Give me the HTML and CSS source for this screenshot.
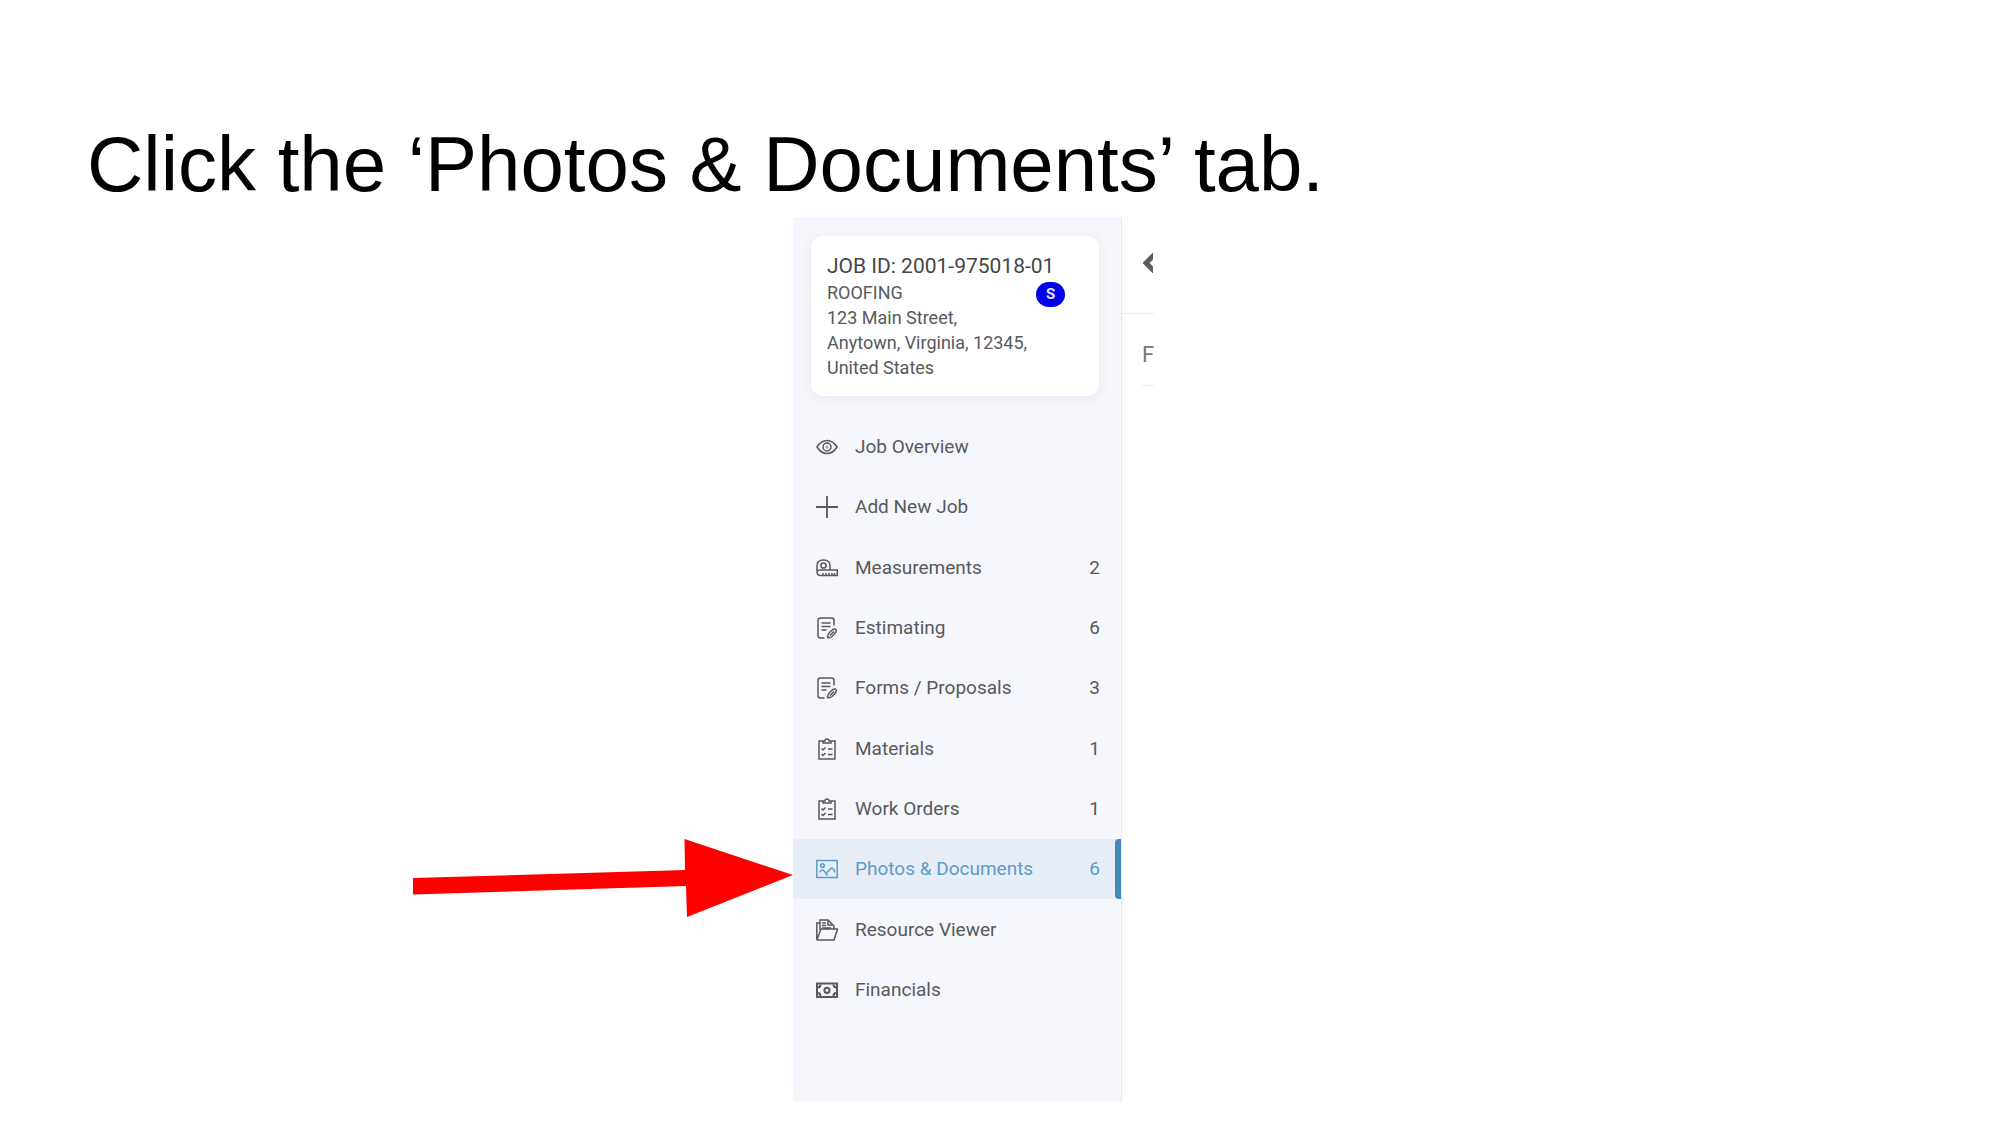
FILE: index.html
```html
<!DOCTYPE html>
<html lang="en">
<head>
<meta charset="utf-8">
<title>Photos &amp; Documents tab</title>
<link rel="stylesheet" href="styles.css">
</head>
<body>
<svg class="sprite" aria-hidden="true">
  <symbol id="doc-edit" viewBox="0 0 22 22">
    <path d="M18 8.500V3.500Q18 1 15.500 1H4.500Q2 1 2 3.500V18.500Q2 21 4.500 21H8.500M5.500 6H14.500M5.500 9.500H14.500M5.500 13H10.500"/>
    <path d="M11.500 20.500Q11.500 17.500 13.500 15.500L17 12.500Q20 11 20.300 13.500Q20.300 15 18.500 17L16 19.500Q14 21 11.500 20.500ZM14 18.500L18 14.500"/>
  </symbol>
  <symbol id="checklist" viewBox="0 0 22 22">
    <path d="M7 3H3V21H19V3H15M7 5V3H9Q9 1 11 1T13 3H15V5Z"/>
    <path d="M5.500 10.500L7 12L9.500 9.500M12 11H16.500M5.500 16L7 17.500L9.500 15M12 16.500H16.500"/>
  </symbol>
</svg>
<main class="slide">
  <h1 class="title">Click the ‘Photos &amp; Documents’ tab.</h1>
  <div class="stage">
    <svg class="arrow" viewBox="0 0 380 78" role="img" aria-label="Arrow pointing at Photos &amp; Documents">
      <path d="M0 39L272 31L271.500 0L380 36L274 78L273 47L0 55.500Z"/>
    </svg>
    <div class="app">
      <aside class="sidebar">
        <section class="card">
          <div class="job-id">JOB ID: 2001-975018-01</div>
          <div class="trade"><span>ROOFING</span><span class="badge">S</span></div>
          <address class="address">123 Main Street,<br>Anytown, Virginia, 12345,<br>United States</address>
        </section>
        <nav class="menu">
          <a class="item" href="#overview">
            <svg class="icon" viewBox="0 0 22 22"><path d="M1 11Q5 4.500 11 4.500T21 11Q17 17.500 11 17.500T1 11Z"/><circle cx="11" cy="11" r="4"/><circle cx="11" cy="11" r="1" stroke-width=".6"/></svg>
            <span class="label">Job Overview</span>
          </a>
          <a class="item" href="#add">
            <svg class="icon" viewBox="0 0 22 22"><path stroke-width="1.800" d="M11 0V22M0 11H22"/></svg>
            <span class="label">Add New Job</span>
          </a>
          <a class="item" href="#measurements">
            <svg class="icon" viewBox="0 0 22 22"><path d="M1 14V9Q1 3 7.500 3T14 9V13H21.300V18.500H5Q1 18.500 1 15Q1 13 4 13H14M7 18V16M10 18V16M13 18V16M16 18V16M18.500 18V16"/><circle cx="7.500" cy="8.500" r="2.600"/></svg>
            <span class="label">Measurements</span><span class="count">2</span>
          </a>
          <a class="item" href="#estimating">
            <svg class="icon"><use href="#doc-edit"/></svg>
            <span class="label">Estimating</span><span class="count">6</span>
          </a>
          <a class="item" href="#forms">
            <svg class="icon"><use href="#doc-edit"/></svg>
            <span class="label">Forms / Proposals</span><span class="count">3</span>
          </a>
          <a class="item" href="#materials">
            <svg class="icon"><use href="#checklist"/></svg>
            <span class="label">Materials</span><span class="count">1</span>
          </a>
          <a class="item" href="#orders">
            <svg class="icon"><use href="#checklist"/></svg>
            <span class="label">Work Orders</span><span class="count">1</span>
          </a>
          <a class="item active" href="#photos" aria-current="page">
            <svg class="icon" viewBox="0 0 22 22"><path d="M.8 2.500H21.200V19.500H.8ZM3.500 14.500Q5 11.500 7 12Q9 13 10 16L12 17M10.500 15L15.500 10Q17.500 10 19 14.500"/><circle cx="6.500" cy="7.500" r="1.800"/></svg>
            <span class="label">Photos &amp; Documents</span><span class="count">6</span>
          </a>
          <a class="item" href="#resources">
            <svg class="icon" viewBox="0 0 22 22"><path d="M4 4H.8V21L5 10H21.500L18 21H.8M4 11V1H12L18 7V10M12 1V6H17M6 4H10M6 6.500H10M6 9H15"/></svg>
            <span class="label">Resource Viewer</span>
          </a>
          <a class="item" href="#financials">
            <svg class="icon bold" viewBox="0 0 22 22"><path d="M1 4.500H21V18H1Z"/><circle cx="11" cy="11.300" r="2.600"/><path d="M1.500 8.500Q4.500 8.500 4.500 5.500M20.500 8.500Q17.500 8.500 17.500 5.500M1.500 14Q4.500 14 4.500 17M20.500 14Q17.500 14 17.500 17"/></svg>
            <span class="label">Financials</span>
          </a>
        </nav>
      </aside>
      <section class="content">
        <div class="back"><svg class="chevron" viewBox="0 0 10 20" aria-hidden="true"><path d="M13 0L3 10L13 20"/></svg></div>
        <div class="heading">F</div>
      </section>
    </div>
  </div>
</main>
</body>
</html>
```
FILE: styles.css
```css
* { box-sizing: border-box; }
body { margin: 0; background: #fff; font-family: Roboto, "Liberation Sans", sans-serif; color: #58595d; }
.sprite { display: none; }
.slide { padding: 119px 0 24px; }
.title { margin: 0 0 8px; padding-left: 87px; font: 400 78px/90px "Liberation Sans", Arial, sans-serif; color: #000; }
.stage { display: grid; grid-template-columns: 793fr 360px 847fr; align-items: start; }
.arrow { width: 380px; height: 78px; margin-top: 622px; justify-self: end; fill: #f00; }
.app { display: grid; grid-template-columns: 329px 1fr; }
.sidebar { padding: 19px 0 82px; background: #f6f7fc; border-right: 1px solid #e6e9f1; }
.card { margin: 0 22px 21px 18px; padding: 16px; background: #fff; border-radius: 12px; box-shadow: 0 2px 12px rgba(60, 70, 120, .08); font-size: 18px; line-height: 25px; }
.job-id { font-size: 21px; line-height: 28px; color: #454648; white-space: nowrap; }
.trade { display: flex; align-items: flex-start; justify-content: space-between; height: 25px; padding-right: 18px; }
.badge { width: 29px; height: 25px; margin-top: 2px; border-radius: 13px; background: #0000ea; color: #e4e4ff; font-size: 15px; font-weight: 700; text-align: center; }
.address { font-style: normal; }
.menu { display: grid; grid-auto-rows: 1fr; min-height: 603px; }
.item { position: relative; display: flex; align-items: center; gap: 17px; padding: 0 21px 0 23px; color: inherit; text-decoration: none; font-size: 19px; line-height: 24px; white-space: nowrap; }
.label { flex: 1; }
.icon { flex: none; width: 22px; height: 22px; fill: none; stroke: currentColor; stroke-width: 1.5; }
.bold { stroke-width: 2; }
.active { color: #5a9ccb; background: #e8eef8; }
.active::after { content: ""; position: absolute; top: 0; right: 0; bottom: 0; width: 6px; border-radius: 4px 0 0 4px; background: #4587bf; }
.back { display: flex; align-items: center; height: 97px; padding: 0 0 4px 21px; border-bottom: 1px solid #ececee; }
.chevron { width: 10px; height: 20px; overflow: hidden; fill: none; stroke: #5c5c5e; stroke-width: 5; }
.heading { height: 72px; margin-left: 20px; padding-top: 27px; border-bottom: 1px solid #ececee; font-size: 22px; line-height: 28px; color: #77787b; }
```
